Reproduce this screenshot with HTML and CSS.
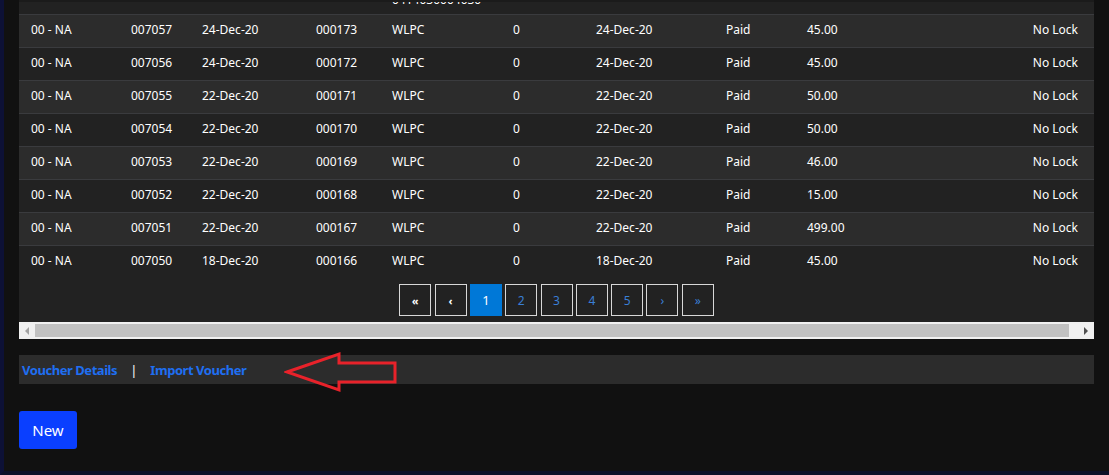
FILE: index.html
```html
<!DOCTYPE html>
<html lang="en">
<head>
<meta charset="utf-8">
<title>Vouchers</title>
<link rel="stylesheet" href="styles.css">
</head>
<body>
<div class="screen">
  <div class="grid-wrap">
    <table class="grid">
      <colgroup>
        <col class="c1"><col class="c2"><col class="c3"><col class="c4"><col class="c5">
        <col class="c6"><col class="c7"><col class="c8"><col class="c9"><col class="c10">
      </colgroup>
      <tbody>
        <tr class="partial">
          <td></td><td></td><td></td><td></td>
          <td><div class="clip"><span>0414030004030</span></div></td>
          <td></td><td></td><td></td><td></td><td></td>
        </tr>
        <tr class="odd"><td>00 - NA</td><td>007057</td><td>24-Dec-20</td><td>000173</td><td>WLPC</td><td>0</td><td>24-Dec-20</td><td>Paid</td><td>45.00</td><td class="r">No Lock</td></tr>
        <tr class="even"><td>00 - NA</td><td>007056</td><td>24-Dec-20</td><td>000172</td><td>WLPC</td><td>0</td><td>24-Dec-20</td><td>Paid</td><td>45.00</td><td class="r">No Lock</td></tr>
        <tr class="odd"><td>00 - NA</td><td>007055</td><td>22-Dec-20</td><td>000171</td><td>WLPC</td><td>0</td><td>22-Dec-20</td><td>Paid</td><td>50.00</td><td class="r">No Lock</td></tr>
        <tr class="even"><td>00 - NA</td><td>007054</td><td>22-Dec-20</td><td>000170</td><td>WLPC</td><td>0</td><td>22-Dec-20</td><td>Paid</td><td>50.00</td><td class="r">No Lock</td></tr>
        <tr class="odd"><td>00 - NA</td><td>007053</td><td>22-Dec-20</td><td>000169</td><td>WLPC</td><td>0</td><td>22-Dec-20</td><td>Paid</td><td>46.00</td><td class="r">No Lock</td></tr>
        <tr class="even"><td>00 - NA</td><td>007052</td><td>22-Dec-20</td><td>000168</td><td>WLPC</td><td>0</td><td>22-Dec-20</td><td>Paid</td><td>15.00</td><td class="r">No Lock</td></tr>
        <tr class="odd"><td>00 - NA</td><td>007051</td><td>22-Dec-20</td><td>000167</td><td>WLPC</td><td>0</td><td>22-Dec-20</td><td>Paid</td><td>499.00</td><td class="r">No Lock</td></tr>
        <tr class="even"><td>00 - NA</td><td>007050</td><td>18-Dec-20</td><td>000166</td><td>WLPC</td><td>0</td><td>18-Dec-20</td><td>Paid</td><td>45.00</td><td class="r">No Lock</td></tr>
      </tbody>
    </table>
    <div class="pager">
      <a class="pg pg-nav">&laquo;</a>
      <a class="pg pg-nav">&lsaquo;</a>
      <a class="pg active">1</a>
      <a class="pg">2</a>
      <a class="pg">3</a>
      <a class="pg">4</a>
      <a class="pg">5</a>
      <a class="pg">&rsaquo;</a>
      <a class="pg">&raquo;</a>
    </div>
    <div class="hscroll">
      <div class="sb-btn"><span class="tri-left"></span></div>
      <div class="sb-thumb"></div>
      <div class="sb-btn"><span class="tri-right"></span></div>
    </div>
  </div>

  <div class="linkbar">
    <a class="lnk">Voucher Details</a>
    <span class="sep">|</span>
    <a class="lnk">Import Voucher</a>
    <svg class="annot" width="116" height="44" viewBox="0 0 116 44">
      <polygon points="3,21 55,3 55,12 111,12 111,31 55,31 55,39" fill="none" stroke="#e8222a" stroke-width="3" stroke-linejoin="miter"/>
    </svg>
  </div>

  <div class="actions">
    <button class="btn-new">New</button>
  </div>
</div>
</body>
</html>
```
FILE: styles.css
```css
html, body {
  margin: 0;
  padding: 0;
  background: #111111;
}

body {
  font-family: "Noto Sans", "Open Sans", sans-serif;
  color: #ffffff;
}

.screen {
  box-sizing: border-box;
  min-height: 475px;
  border-left: 4px solid #0d1136;
  border-bottom: 4px solid #0c1128;
  padding: 0 15px 0 15px;
}

.grid-wrap {
  width: 1075px;
}

.grid {
  width: 1075px;
  border-collapse: collapse;
  table-layout: fixed;
  font-size: 12px;
}

.c1 { width: 100px; }
.c2 { width: 71px; }
.c3 { width: 114px; }
.c4 { width: 76px; }
.c5 { width: 121px; }
.c6 { width: 83px; }
.c7 { width: 130px; }
.c8 { width: 81px; }
.c9 { width: 120px; }
.c10 { width: auto; }

.grid td {
  height: 33px;
  padding: 0 0 2px 12px;
  box-sizing: border-box;
  border-top: 1px solid #3a3b3e;
  white-space: nowrap;
  vertical-align: middle;
  line-height: 16px;
}

.grid td.r {
  text-align: right;
  padding-right: 16px;
}

.grid tr.partial td {
  height: 13px;
  padding: 0;
  border-top: 2px solid #1b1b1b;
  background: #222222;
}

.grid tr.partial td .clip {
  height: 11px;
  overflow: hidden;
  display: flex;
  align-items: flex-end;
  padding-left: 12px;
}

.grid tr.partial td .clip span {
  display: block;
  line-height: 16px;
  margin-bottom: 5px;
}

.grid tr.odd td { background: #2c2c2c; }
.grid tr.even td { background: #222222; }

.pager {
  display: flex;
  justify-content: center;
  gap: 3.33px;
  padding: 6px 0;
  background: #222222;
}

.pg {
  box-sizing: border-box;
  width: 32px;
  height: 32px;
  border: 1px solid #d8d8d8;
  display: flex;
  align-items: center;
  justify-content: center;
  font-size: 12px;
  color: #3a7fd6;
  text-decoration: none;
}

.pg-nav {
  color: #ffffff;
  font-size: 11px;
  font-weight: bold;
}

.pg.active {
  background: #0078d7;
  border-color: #0078d7;
  color: #ffffff;
  font-size: 13px;
}

.hscroll {
  display: flex;
  height: 17px;
  background: #f0f0f0;
}

.sb-btn {
  width: 16px;
  display: flex;
  align-items: center;
  justify-content: center;
}

.sb-btn:last-child {
  width: 17px;
  margin-left: 8px;
}

.tri-left {
  width: 0;
  height: 0;
  border-top: 4px solid transparent;
  border-bottom: 4px solid transparent;
  border-right: 4px solid #a3a3a3;
}

.tri-right {
  width: 0;
  height: 0;
  border-top: 4px solid transparent;
  border-bottom: 4px solid transparent;
  border-left: 4px solid #505050;
}

.sb-thumb {
  flex: 1;
  margin: 2px 0;
  background: #c1c1c1;
}

.linkbar {
  position: relative;
  margin-top: 16px;
  height: 29px;
  width: 1075px;
  background: #2c2c2c;
  display: flex;
  align-items: center;
  padding-left: 3px;
  box-sizing: border-box;
  font-size: 13px;
  font-weight: bold;
}

.lnk {
  color: #1f6ff2;
  letter-spacing: -0.45px;
  cursor: pointer;
}

.sep {
  color: #ffffff;
  margin: 0 13px 0 13px;
  font-weight: normal;
}

.annot {
  position: absolute;
  left: 265px;
  top: -4px;
}

.actions {
  margin-top: 27px;
}

.btn-new {
  width: 58px;
  height: 38px;
  border: none;
  border-radius: 3px;
  background: #0a3fff;
  color: #ffffff;
  font-family: "Noto Sans", "Open Sans", sans-serif;
  font-size: 15px;
  padding: 0;
  cursor: pointer;
}
```
